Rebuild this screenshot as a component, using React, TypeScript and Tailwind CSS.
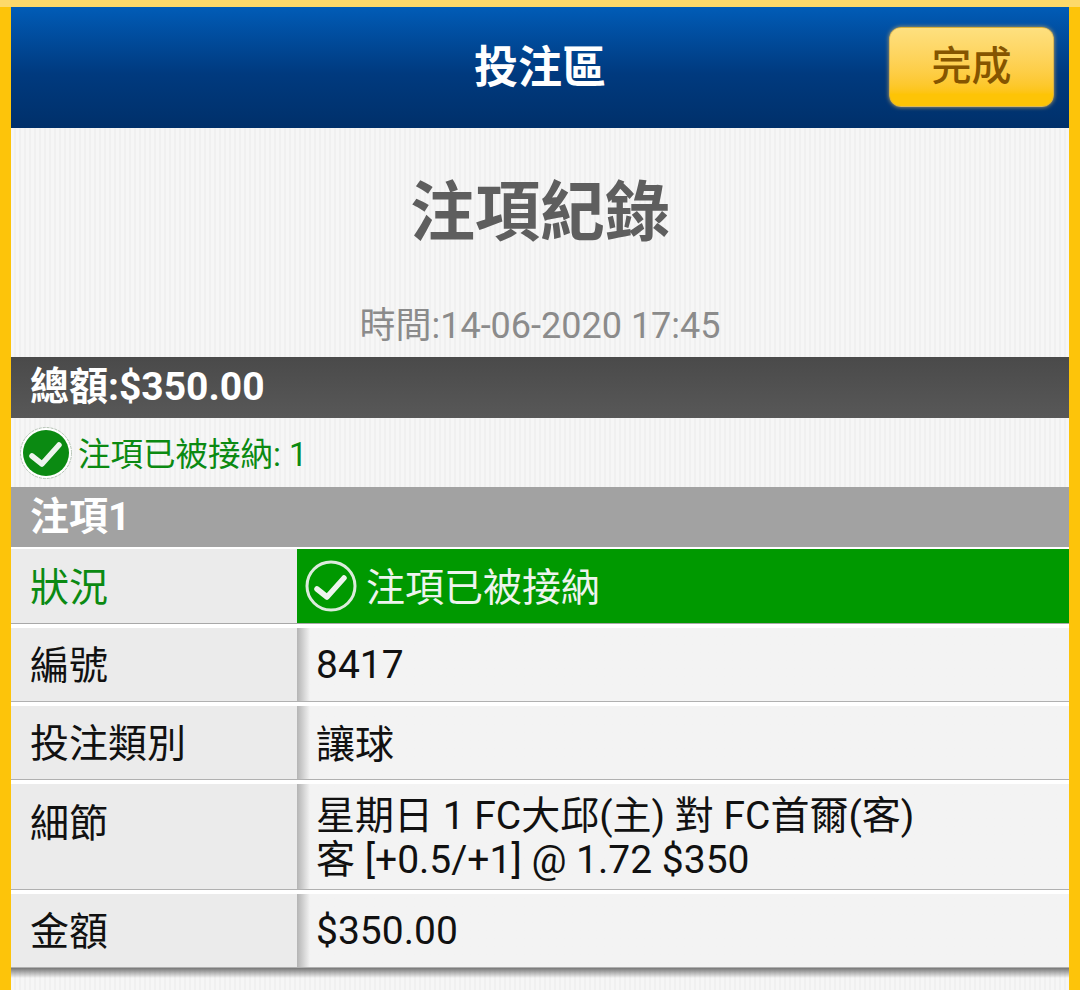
const font = "font-['Roboto','Noto_Sans_CJK_TC',sans-serif]";

function CheckIcon({ filled }: { filled?: boolean }) {
  return (
    <svg width="54" height="54" viewBox="0 0 54 54" className="shrink-0">
      {filled ? (
        <>
          <circle cx="27" cy="27" r="25.5" fill="#fff" stroke="#b5c4b5" strokeWidth="1" strokeDasharray="3 1" />
          <circle cx="27" cy="27" r="23" fill="#0b8a12" />
        </>
      ) : (
        <circle cx="27" cy="27" r="24" fill="none" stroke="#dcebdc" strokeWidth="3" />
      )}
      <path d="M13 30 L23 38 L40 19" fill="none" stroke="#eef4ee" strokeWidth="5.5" strokeLinecap="round" strokeLinejoin="round" />
    </svg>
  );
}

interface Row {
  label: string;
  height: string;
  lines: string[];
  top?: boolean;
  cjk?: boolean;
}

const rows: Row[] = [
  { label: "編號", height: "h-[74px]", lines: ["8417"] },
  { label: "投注類別", height: "h-[74px]", lines: ["讓球"], cjk: true },
  { label: "細節", height: "h-[106px]", lines: ["星期日 1 FC大邱(主) 對 FC首爾(客)", "客 [+0.5/+1] @ 1.72 $350"], top: true },
  { label: "金額", height: "h-[74px]", lines: ["$350.00"] },
];

export default function App() {
  return (
    <div className={`${font} h-[990px] w-[1080px] overflow-hidden bg-[#fdc40a]`}>
      <div className="h-[7px] bg-[#fdd96a]" />
      <div className="mx-[11px] h-[983px] bg-[#f4f4f4] bg-[repeating-linear-gradient(90deg,#f6f6f6_0px,#f6f6f6_3px,#f0f0f0_3px,#f0f0f0_5px)]">
        {/* Top bar */}
        <div className="relative flex h-[121px] items-center justify-center bg-gradient-to-b from-[#015cb7] via-[#003a7f] via-[55%] to-[#00306a]">
          <span className="text-[44px] leading-none font-bold text-white">投注區</span>
          <button className="absolute top-[20px] right-[15px] flex h-[80px] w-[165px] items-center justify-center rounded-[12px] border border-[#c9a850]/70 bg-gradient-to-b from-[#fee07f] to-[#fdc406] to-[85%] text-[40px] font-medium text-[#855500] shadow-[0_0_4px_#b9a060]">
            完成
          </button>
        </div>

        <h1 className="mt-[49px] text-center text-[65px] leading-[72px] font-bold text-[#5e5e5e]">注項紀錄</h1>
        <p className="mt-[56px] h-[52px] text-center text-[36px] leading-[42px] text-[#8b8b8b]">時間:14-06-2020 17:45</p>

        {/* Total */}
        <div className="flex h-[61px] items-center bg-gradient-to-b from-[#4a4a4a] to-[#585858] pl-[19px] text-[39px] font-bold text-white">
          總額:$350.00
        </div>

        <div className="flex h-[69px] items-center gap-[5px] pl-[8px] text-[32.5px] text-[#0b8a12]">
          <CheckIcon filled />
          <span className="pt-[5px]">注項已被接納: 1</span>
        </div>

        {/* Bet */}
        <div className="flex h-[60px] items-center bg-[#a2a2a2] pl-[19px] text-[39px] font-bold text-white">注項1</div>

        <div className="bg-white">
          <div className="flex h-[77px] border-t-2 border-b border-t-white border-b-[#a8a8a8] bg-[#ebebeb]">
            <div className="flex w-[286px] items-center pt-[5px] pl-[19px] text-[39px] text-[#0b8a12]">狀況</div>
            <div className="flex flex-1 items-center gap-[8px] bg-[#009900] pl-[7px] text-[39px] text-[#eef4ee]">
              <CheckIcon />
              <span className="pt-[5px]">注項已被接納</span>
            </div>
          </div>

          {rows.map((row) => (
            <div key={row.label} className={`mt-[4px] flex ${row.height} border-b border-[#b0b0b0] bg-[#f3f3f3] text-[#111111]`}>
              <div className={`flex w-[286px] bg-[#ebebeb] pl-[19px] text-[39px] ${row.top ? "items-start pt-[11px]" : "items-center pt-[4px]"}`}>
                {row.label}
              </div>
              <div className={`flex flex-1 flex-col bg-gradient-to-r from-[#b4b4b4] to-[#f3f3f3] to-[13px] pl-[19px] text-[39px] leading-[44px] ${row.top ? "justify-start pt-[10px]" : "justify-center"} ${row.cjk ? "pt-[4px]" : ""}`}>
                {row.lines.map((line) => (
                  <div key={line}>{line}</div>
                ))}
              </div>
            </div>
          ))}
        </div>
        <div className="h-[10px] bg-gradient-to-b from-[#777777] to-transparent" />
      </div>
    </div>
  );
}
